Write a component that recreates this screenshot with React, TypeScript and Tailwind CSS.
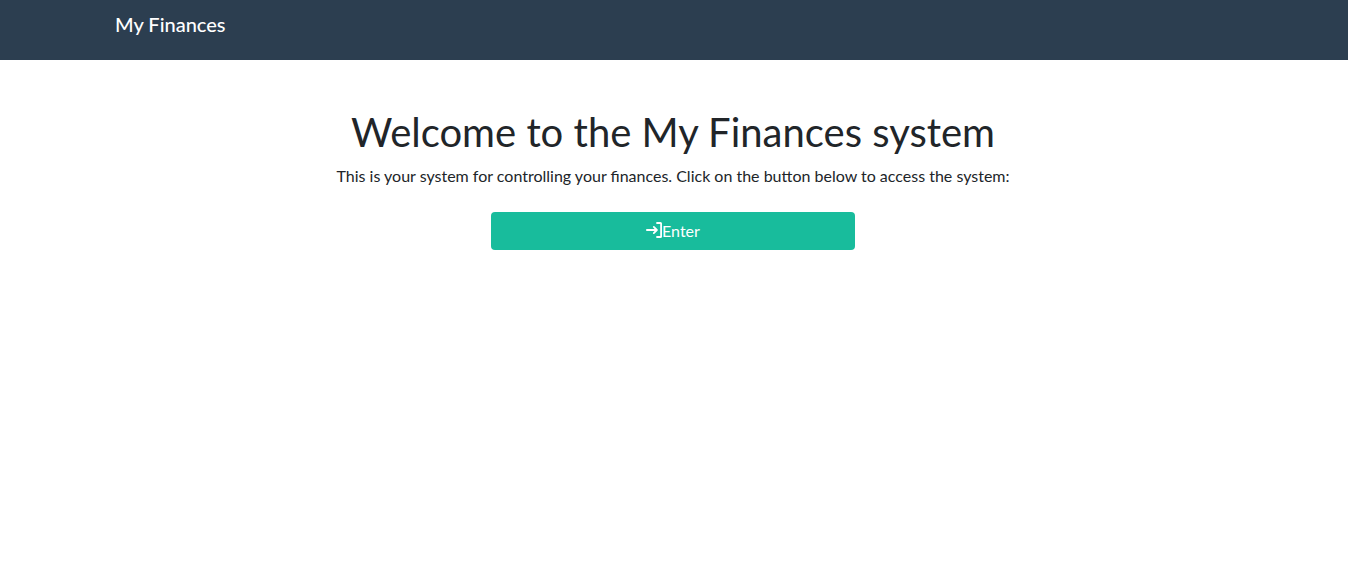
import React from 'react';

function EnterIcon() {
  return (
    <svg
      aria-hidden="true"
      viewBox="0 0 16 16"
      className="mb-0.5 h-4 w-4 shrink-0"
      fill="none"
      stroke="currentColor"
      strokeWidth="1.8"
      strokeLinecap="round"
      strokeLinejoin="round"
    >
      <path d="M11 1H14.500a.6.6 0 0 1 .6.6v12.800a.6.6 0 0 1-.6.6H11" />
      <path d="M.9 8h9.800M7.800 4.900 10.900 8 7.800 11.100" />
    </svg>
  );
}

export default function App() {
  return (
    <div className="min-h-screen bg-white font-['Lato',sans-serif] text-base text-[#212529]">
      <header className="bg-[#2c3e50] pt-1.5 pr-0.5 pb-[18px]">
        <nav className="mx-auto max-w-[1140px] px-3">
          <a href="#" className="inline-block py-1 text-xl leading-7 font-medium text-white">
            My Finances
          </a>
        </nav>
      </header>
      <main className="pt-12 pr-0.5 text-center">
        <div className="mx-auto max-w-[1140px] px-3">
          <h1 className="mb-2 text-[40px] leading-[48px]">Welcome to the My Finances system</h1>
          <p className="mb-6 leading-6">
            This is your system for controlling your finances. Click on the button below to access the system:
          </p>
          <button
            type="button"
            className="mx-auto flex w-full max-w-[364px] items-center justify-center rounded bg-[#18bc9c] py-[7px] leading-6 text-white"
          >
            <EnterIcon />
            Enter
          </button>
        </div>
      </main>
    </div>
  );
}
